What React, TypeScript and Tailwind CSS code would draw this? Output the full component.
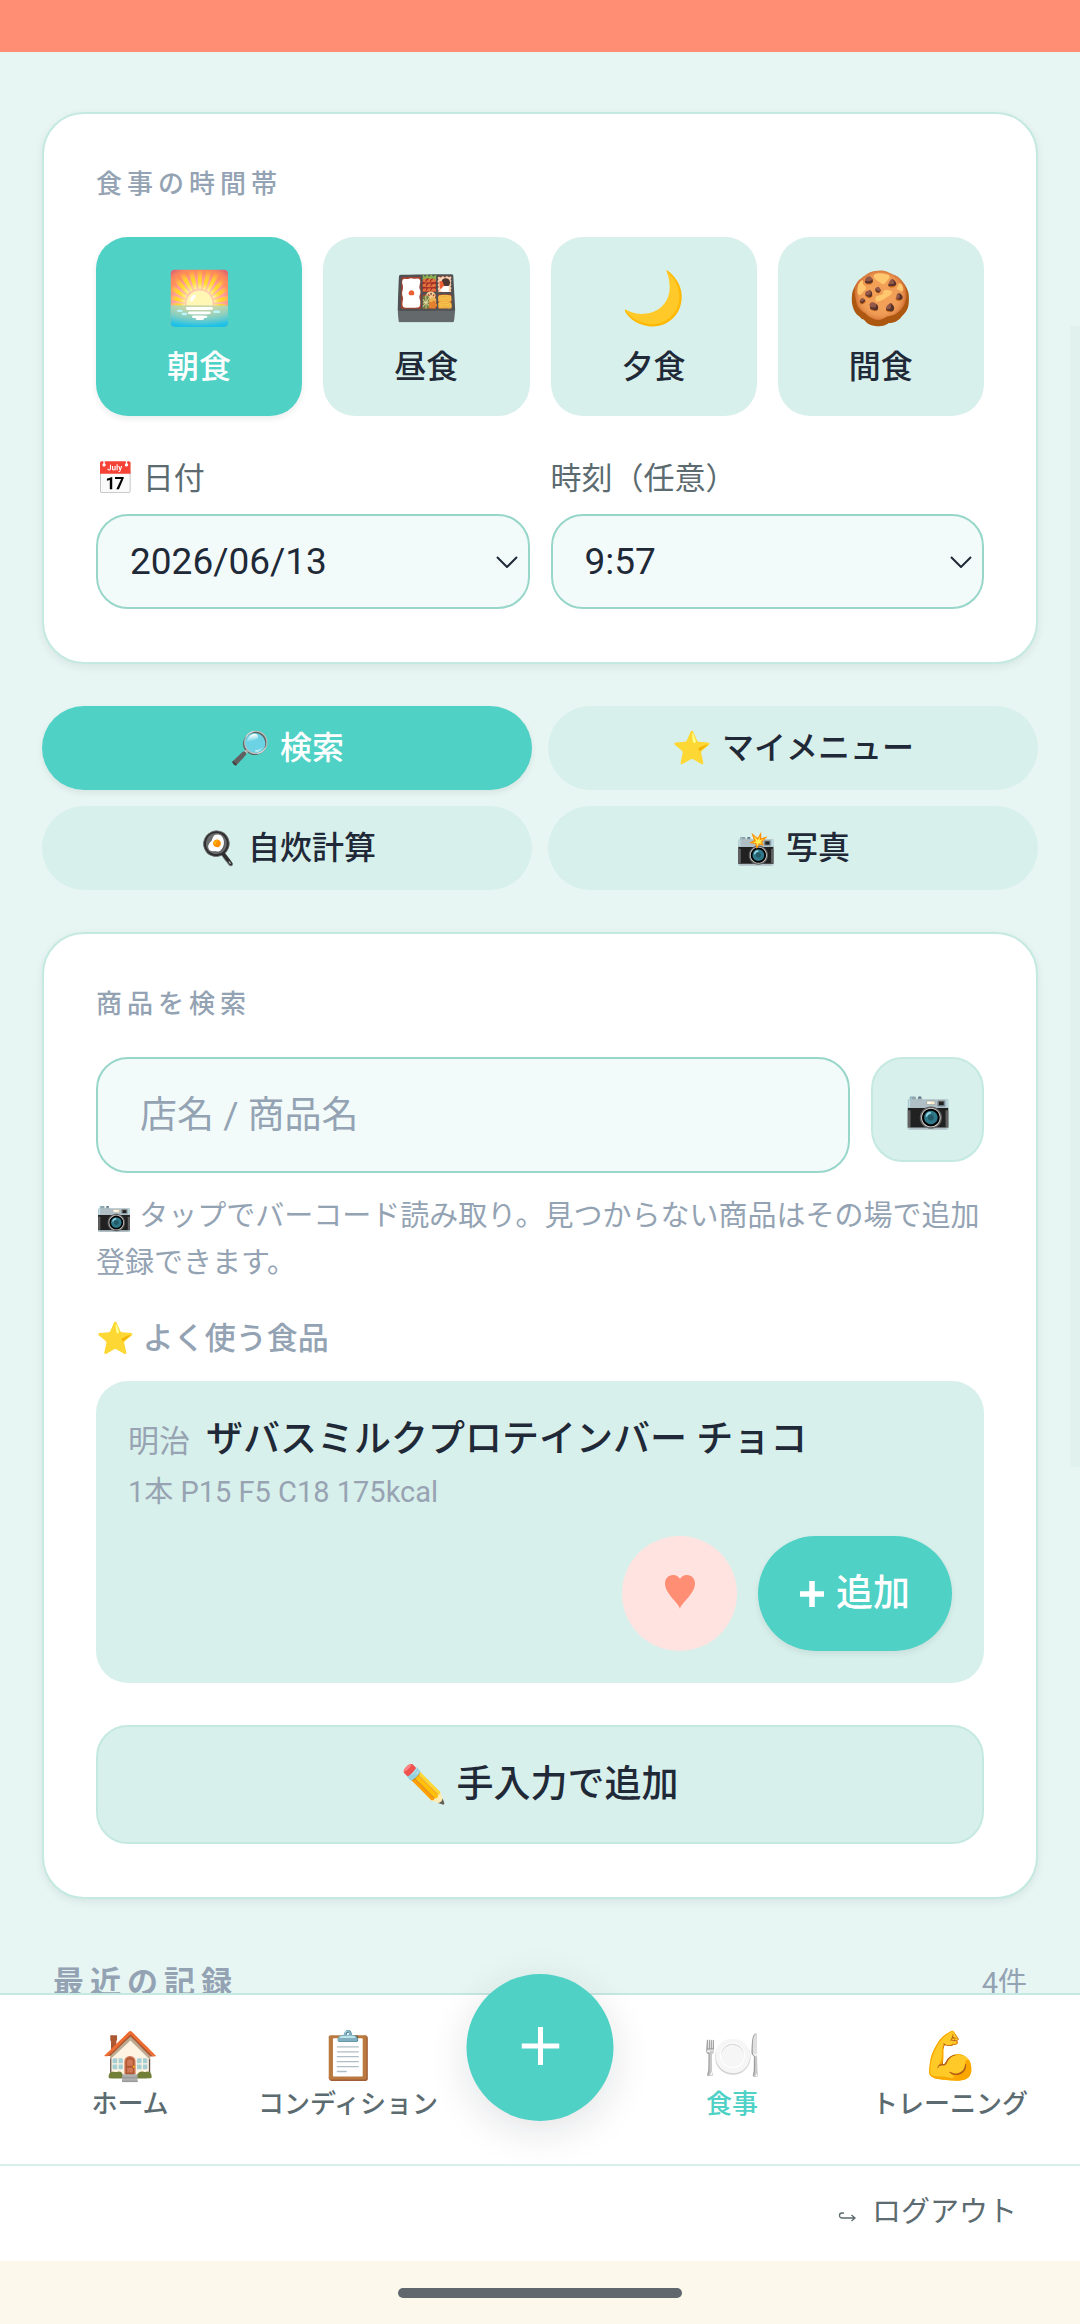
import { useState } from 'react';
import clsx from 'clsx';

const meals = [
  { id: 'breakfast', emoji: '🌅', label: '朝食' },
  { id: 'lunch', emoji: '🍱', label: '昼食' },
  { id: 'dinner', emoji: '🌙', label: '夕食' },
  { id: 'snack', emoji: '🍪', label: '間食' },
];

const tabs = [
  { id: 'search', emoji: '🔎', label: '検索' },
  { id: 'my', emoji: '⭐', label: 'マイメニュー' },
  { id: 'cook', emoji: '🍳', label: '自炊計算' },
  { id: 'photo', emoji: '📸', label: '写真' },
];

function Chevron() {
  return (
    <svg viewBox="0 0 22 12" className="pointer-events-none absolute right-3 top-1/2 h-3 w-[22px] -translate-y-1/2" fill="none" stroke="#1f2937" strokeWidth="2">
      <path d="M1 1l10 10L21 1" />
    </svg>
  );
}

function SelectField({ id, label, emoji, value }: { id: string; label: string; emoji?: string; value: string }) {
  return (
    <div>
      <label htmlFor={id} className="block text-[31px] leading-[46px] text-[#5b6b70]">
        {emoji ? `${emoji} ${label}` : label}
      </label>
      <div className="relative mt-3">
        <select
          id={id}
          defaultValue={value}
          className="h-[95px] w-full appearance-none rounded-[32px] border-2 border-[#98d6ca] bg-[#f2fbfa] px-8 text-[37px] text-[#1f2937]"
        >
          <option>{value}</option>
        </select>
        <Chevron />
      </div>
    </div>
  );
}

function NavItem({ emoji, label, active }: { emoji: string; label: string; active?: boolean }) {
  return (
    <a href="#" className={clsx('flex flex-1 flex-col items-center font-medium', active ? 'text-[#4fd1c5]' : 'text-[#5b6b70]')}>
      <span className="text-[47px] leading-[52px]">{emoji}</span>
      <span className="whitespace-nowrap text-[26px] leading-[44px]">{label}</span>
    </a>
  );
}

export default function App() {
  const [meal, setMeal] = useState('breakfast');
  const [tab, setTab] = useState('search');

  return (
    <div className="relative min-h-screen bg-[#e8f6f3] font-[Roboto,'Noto_Sans_CJK_JP',sans-serif] text-[#1f2937]">
      <div className="h-[52px] bg-[#ff8e75]"></div>

      <main className="px-[42px] pb-72 pt-[60px]">
        {/* Meal slot */}
        <section className="rounded-[42px] border-2 border-[#c4e9e0] bg-white px-[52px] py-[53px] shadow-[0_3px_8px_rgba(15,23,42,0.08)]">
          <h2 className="mb-9 text-[26px] font-medium leading-[34px] tracking-[5px] text-[#94a3b3]">食事の時間帯</h2>
          <div className="grid grid-cols-4 gap-[21px]">
            {meals.map((m) => (
              <button
                key={m.id}
                onClick={() => setMeal(m.id)}
                className={clsx(
                  'flex h-[179px] flex-col items-center justify-center rounded-[32px] font-medium',
                  meal === m.id ? 'bg-[#4fd1c5] text-white shadow-[0_3px_6px_rgba(15,23,42,0.08)]' : 'bg-[#d8f0eb]'
                )}
              >
                <span className="text-[52px] leading-[80px]">{m.emoji}</span>
                <span className="text-[32px] leading-[56px]">{m.label}</span>
              </button>
            ))}
          </div>
          <div className="mt-10 grid grid-cols-2 gap-[21px]">
            <SelectField id="date" emoji="📅" label="日付" value="2026/06/13" />
            <SelectField id="time" label="時刻（任意）" value="9:57" />
          </div>
        </section>

        {/* Input method */}
        <div className="mt-[42px] grid grid-cols-2 gap-4">
          {tabs.map((t) => (
            <button
              key={t.id}
              onClick={() => setTab(t.id)}
              className={clsx(
                'flex h-[84px] items-center justify-center gap-[10px] rounded-full text-[32px] font-medium',
                tab === t.id ? 'bg-[#4fd1c5] text-white shadow-[0_3px_6px_rgba(15,23,42,0.08)]' : 'bg-[#d8f0eb]'
              )}
            >
              <span>{t.emoji}</span>
              <span>{t.label}</span>
            </button>
          ))}
        </div>

        {/* Product search */}
        <section className="mt-[42px] rounded-[42px] border-2 border-[#c4e9e0] bg-white px-[52px] py-[53px] shadow-[0_3px_8px_rgba(15,23,42,0.08)]">
          <h2 className="mb-9 text-[26px] font-medium leading-[34px] tracking-[5px] text-[#94a3b3]">商品を検索</h2>
          <div className="flex items-start gap-[21px]">
            <input
              type="search"
              aria-label="店名 / 商品名"
              placeholder="店名 / 商品名"
              className="h-[116px] min-w-0 flex-1 rounded-[32px] border-2 border-[#98d6ca] bg-[#f2fbfa] px-[42px] text-[37px] placeholder:text-[#94a3b3]"
            />
            <button aria-label="バーコード読み取り" className="h-[105px] w-[113px] rounded-[32px] border-2 border-[#c4e9e0] bg-[#d8f0eb] text-[37px]">
              📷
            </button>
          </div>
          <p className="mt-5 text-[29px] leading-[47px] text-[#94a3b3]">
            📷 タップでバーコード読み取り。見つからない商品はその場で追加登録できます。
          </p>

          <h3 className="mt-7 text-[31px] font-medium leading-[48px] text-[#94a3b3]">⭐ よく使う食品</h3>
          <div className="mt-[18px] rounded-[32px] bg-[#d8f0eb] p-8">
            <div className="flex items-baseline gap-4 leading-[54px]">
              <span className="text-[31px] text-[#97a3b2]">明治</span>
              <span className="text-[37px] font-medium">ザバスミルクプロテインバー チョコ</span>
            </div>
            <div className="text-[29px] leading-[46px] text-[#97a3b2]">1本 P15 F5 C18 175kcal</div>
            <div className="mt-[21px] flex justify-end gap-[21px]">
              <button aria-label="お気に入り" className="flex h-[115px] w-[115px] items-center justify-center rounded-full bg-[#fee3e1]">
                <svg viewBox="0 0 30 38" className="h-[38px] w-[30px]" fill="#ff8e75">
                  <path d="M15 34C14 28 0 19 0 8.500C0 3.500 3.500 0 8 0C11.500 0 14 1.800 15 4C16 1.800 18.500 0 22 0C26.500 0 30 3.500 30 8.500C30 19 16 28 15 34Z" />
                </svg>
              </button>
              <button className="flex h-[115px] items-center gap-3 rounded-full bg-[#4fd1c5] px-[42px] text-[37px] font-medium text-white shadow-[0_3px_6px_rgba(15,23,42,0.08)]">
                <svg viewBox="0 0 24 26" className="h-[26px] w-6" stroke="currentColor" strokeWidth="5.500">
                  <path d="M12 0v26M0 13h24" />
                </svg>
                追加
              </button>
            </div>
          </div>

          <button className="mt-[42px] h-[119px] w-full rounded-[32px] border-2 border-[#c4e9e0] bg-[#d8f0eb] text-[37px] font-medium">
            ✏️ 手入力で追加
          </button>
        </section>

        <div className="mt-[60px] flex items-center justify-between px-[11px] text-[#94a3b3]">
          <h2 className="text-[31px] font-bold leading-[48px] tracking-[6px]">最近の記録</h2>
          <span className="text-[29px] leading-[48px]">4件</span>
        </div>
      </main>

      {/* Scroll thumb */}
      <div className="absolute right-0 top-[326px] h-[1141px] w-[10px] bg-[#e1f1ed]"></div>

      <footer className="fixed inset-x-0 bottom-0">
        <nav className="flex h-[171px] border-t-2 border-[#c4e9e0] bg-white px-[21px] pt-[35px]">
          <NavItem emoji="🏠" label="ホーム" />
          <NavItem emoji="📋" label="コンディション" />
          <div className="relative w-[166px]">
            <button
              aria-label="記録を追加"
              className="absolute -top-14 left-1/2 flex h-[147px] w-[147px] -translate-x-1/2 items-center justify-center rounded-full bg-[#4fd1c5] shadow-[0_10px_40px_rgba(15,23,42,0.12)]"
            >
              <svg viewBox="0 0 38 42" className="h-[42px] w-[38px]" stroke="#fff" strokeWidth="5">
                <path d="M19 0v38M0 19h38" />
              </svg>
            </button>
          </div>
          <NavItem emoji="🍽️" label="食事" active />
          <NavItem emoji="💪" label="トレーニング" />
        </nav>
        <div className="flex h-[97px] items-center justify-end border-t-2 border-[#d8f0eb] bg-white px-[63px] pb-[2px]">
          <a href="#" className="flex items-center gap-4 text-[29px] text-[#5b6b70]">
            <svg viewBox="0 0 18 10" className="mt-2 h-[10px] w-[18px]" fill="none" stroke="currentColor" strokeWidth="1.300">
              <path d="M6 1H4a2.500 2.500 0 0 0 0 5h13M13.500 3l3.500 3-3.500 3" />
            </svg>
            ログアウト
          </a>
        </div>
        <div className="flex h-[63px] items-center justify-center bg-[#fdf8ec]">
          <div className="h-[10px] w-[284px] rounded-full bg-[#60686d]"></div>
        </div>
      </footer>
    </div>
  );
}
